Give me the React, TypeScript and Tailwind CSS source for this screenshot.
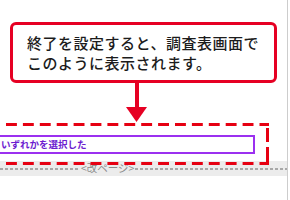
const JP = "font-['Noto_Sans_CJK_JP','Noto_Sans',sans-serif]";

function Callout() {
  return (
    <div className="ml-[10px] mt-[22px] h-[61px] w-[267px] rounded-[6px] border-[3px] border-[#e60023] bg-white pl-[14px] pt-[8px]">
      <p className="text-[15px] font-medium leading-[20px] tracking-[0.5px] text-[#1c1c1c]">
        終了を設定すると、調査表画面で
        <br />
        このように表示されます。
      </p>
    </div>
  );
}

function DownArrow() {
  return (
    <svg className="ml-[126px] block" width="21" height="39" viewBox="0 0 21 39">
      <rect x="9" y="0" width="4" height="26" fill="#e60023" />
      <polygon points="0,24 21,24 10.5,39" fill="#e60023" />
    </svg>
  );
}

function DashedFrame() {
  // highlight frame around the answer field; left side runs off the page
  return (
    <svg className="pointer-events-none absolute left-0 top-0" width="290" height="200">
      <g stroke="#e60012" strokeWidth="3" fill="none">
        <line x1="-10.9" y1="124.5" x2="269" y2="124.5" strokeDasharray="10.9 6" />
        <line x1="-10.9" y1="163.5" x2="269" y2="163.5" strokeDasharray="10.9 6" />
        <line x1="267.5" y1="123" x2="267.5" y2="165" strokeDasharray="3 2 14 5 18" />
      </g>
    </svg>
  );
}

export default function App() {
  return (
    <div className={`relative flex h-[200px] w-[290px] overflow-hidden bg-white ${JP}`}>
      <div className="flex w-[287px] flex-col">
        <Callout />
        <DownArrow />
        <div className="mt-[13px] flex h-[19px] w-[255px] items-center border-y-2 border-r-2 border-[#9b30f0] pl-[1px]">
          <span className="text-[9.5px] font-bold leading-none text-[#6c1cd0]">いずれかを選択した</span>
        </div>
        <div className="mt-[7px] flex h-[15px] items-center bg-[#ececec]">
          <div className="h-[2px] w-[80px] bg-[repeating-linear-gradient(90deg,#a8a8a8_0_3px,transparent_3px_5px)]" />
          <span className="px-[1px] text-[10.5px] leading-none text-[#8a8a8a]">&lt;改ページ&gt;</span>
          <div className="h-[2px] flex-1 bg-[repeating-linear-gradient(90deg,#a8a8a8_0_3px,transparent_3px_5px)]" />
        </div>
      </div>
      <div className="h-full w-px bg-[#cdcdcd]" />
      <DashedFrame />
    </div>
  );
}
